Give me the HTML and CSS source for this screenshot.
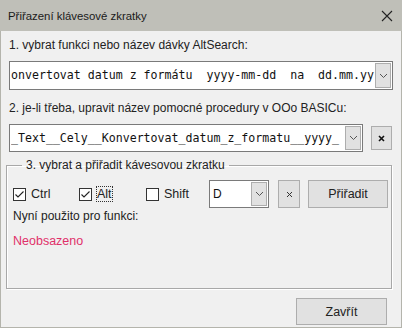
FILE: index.html
```html
<!DOCTYPE html>
<html>
<head>
<meta charset="utf-8">
<link rel="stylesheet" href="styles.css">
</head>
<body>
<div class="window">
  <div class="titlebar">
    <span class="title">Přiřazení klávesové zkratky</span>
    <svg class="close" width="12" height="12" viewBox="0 0 12 12"><path d="M1 1L11 11M11 1L1 11" stroke="#222" stroke-width="1.1" fill="none"/></svg>
  </div>
  <div class="content">
    <div class="label l1">1. vybrat funkci nebo název dávky AltSearch:</div>
    <div class="combo c1">
      <span class="combo-text">onvertovat datum z formátu  yyyy-mm-dd  na  dd.mm.yy</span>
      <span class="drop"><svg width="9" height="6" viewBox="0 0 9 6"><path d="M1 1L4.5 4.5L8 1" stroke="#555" fill="none"/></svg></span>
    </div>
    <div class="label l2">2. je-li třeba, upravit název pomocné procedury v OOo BASICu:</div>
    <div class="row2">
      <div class="combo c2">
        <span class="combo-text">_Text__Cely__Konvertovat_datum_z_formatu__yyyy_</span>
        <span class="drop"><svg width="9" height="6" viewBox="0 0 9 6"><path d="M1 1L4.5 4.5L8 1" stroke="#555" fill="none"/></svg></span>
      </div>
      <div class="btn xbtn bold"><svg width="7" height="7" viewBox="0 0 7 7"><path d="M1 1L6 6M6 1L1 6" stroke="#111" stroke-width="1.6" fill="none"/></svg></div>
    </div>
    <fieldset class="group">
      <legend>3. vybrat a přiřadit kávesovou zkratku</legend>
      <div class="keys">
        <label class="chk w1"><span class="box"><svg width="11" height="11" viewBox="0 0 11 11"><path d="M1.5 5.5L4 8L9.5 2.5" stroke="#222" stroke-width="1.1" fill="none"/></svg></span><span>Ctrl</span></label>
        <label class="chk w2"><span class="box"><svg width="11" height="11" viewBox="0 0 11 11"><path d="M1.5 5.5L4 8L9.5 2.5" stroke="#222" stroke-width="1.1" fill="none"/></svg></span><span class="focus">Alt</span></label>
        <label class="chk w3"><span class="box"></span><span>Shift</span></label>
        <div class="combo c3">
          <span class="combo-text sans">D</span>
          <span class="drop"><svg width="9" height="6" viewBox="0 0 9 6"><path d="M1 1L4.5 4.5L8 1" stroke="#555" fill="none"/></svg></span>
        </div>
        <div class="btn xbtn2"><svg width="7" height="7" viewBox="0 0 7 7"><path d="M1 1L6 6M6 1L1 6" stroke="#333" stroke-width="1" fill="none"/></svg></div>
        <div class="btn assign">Přiřadit</div>
      </div>
      <div class="label now">Nyní použito pro funkci:</div>
      <div class="label free">Neobsazeno</div>
    </fieldset>
    <div class="footer">
      <div class="btn closebtn">Zavřít</div>
    </div>
  </div>
</div>
</body>
</html>
```

FILE: styles.css
```css
html, body {
  margin: 0;
  padding: 0;
  background: #f0f0f0;
}
.window {
  width: 402px;
  height: 328px;
  box-sizing: border-box;
  border: 1px solid #b4b4ac;
  border-top: none;
  background: #f0f0f0;
  display: flex;
  flex-direction: column;
  font-family: "Liberation Sans", Arial, sans-serif;
  font-size: 12px;
  color: #222;
}
.titlebar {
  height: 31px;
  flex: none;
  background: #bfbfb8;
  display: flex;
  align-items: center;
  justify-content: space-between;
  padding: 0 8px 0 8px;
  margin: 0 -1px;
}
.title {
  font-size: 11.4px;
  color: #1a1a1a;
}
.close {
  display: block;
  margin-right: 1px;
}
.content {
  flex: 1;
  padding: 0 8px 0 8px;
  display: flex;
  flex-direction: column;
}
.label {
  line-height: 14px;
  white-space: nowrap;
}
.l1 {
  margin-top: 7px;
}
.combo {
  box-sizing: border-box;
  border: 1px solid #7a7a7a;
  background: #fff;
  display: flex;
  align-items: stretch;
  padding: 1px;
  overflow: hidden;
}
.combo-text {
  flex: 1;
  overflow: hidden;
  white-space: pre;
  font-family: "DejaVu Sans Mono", "Liberation Mono", monospace;
  font-size: 11.6px;
  line-height: 25px;
  padding-left: 0;
  color: #111;
}
.combo-text.sans {
  font-family: "Liberation Sans", Arial, sans-serif;
  font-size: 12px;
  padding-left: 2px;
}
.drop {
  flex: none;
  width: 16px;
  box-sizing: border-box;
  border: 1px solid #adadad;
  background: #e1e1e1;
  display: flex;
  align-items: center;
  justify-content: center;
}
.c1 {
  margin-top: 9px;
  height: 29px;
  width: 384px;
}
.l2 {
  margin-top: 11px;
}
.row2 {
  margin-top: 9px;
  display: flex;
  align-items: center;
  gap: 8px;
}
.c2 {
  width: 354px;
  height: 28px;
}
.btn {
  box-sizing: border-box;
  border: 1px solid #adadad;
  background: #e1e1e1;
  display: flex;
  align-items: center;
  justify-content: center;
  color: #222;
}
.xbtn {
  width: 21px;
  height: 24px;
}
.group {
  margin: 6px 0 0 -3px;
  width: 386px;
  box-sizing: border-box;
  height: 131px;
  border: 1px solid #a8a8a8;
  box-shadow: inset 1px 1px 0 #fff, 1px 1px 0 #fff;
  padding: 0 0 0 6px;
}
.group legend {
  margin-left: 9px;
  padding: 0 4px;
  line-height: 14px;
  color: #222;
}
.keys {
  margin-top: 8px;
  display: flex;
  align-items: center;
  height: 28px;
}
.chk {
  display: flex;
  align-items: center;
  gap: 5px;
  font-size: 12.5px;
}
.w1 { width: 66px; }
.w2 { width: 67px; }
.w3 { width: 63px; }
.box {
  width: 13px;
  height: 13px;
  box-sizing: border-box;
  border: 1px solid #333;
  background: #fff;
  display: flex;
  align-items: center;
  justify-content: center;
}
.box svg {
  display: block;
}
.focus {
  outline: 1px dotted #333;
  outline-offset: 0;
}
.c3 {
  width: 60px;
  height: 28px;
}
.xbtn2 {
  width: 22px;
  height: 28px;
  margin-left: 9px;
}
.assign {
  width: 80px;
  height: 28px;
  margin-left: 8px;
  font-size: 12.5px;
}
.now {
  margin-top: 1px;
}
.free {
  margin-top: 11px;
  color: #e0306a;
  font-size: 12.5px;
}
.footer {
  display: flex;
  justify-content: flex-end;
  margin-top: 9px;
  padding-right: 6px;
}
.closebtn {
  width: 91px;
  height: 27px;
  font-size: 12.5px;
}
```
